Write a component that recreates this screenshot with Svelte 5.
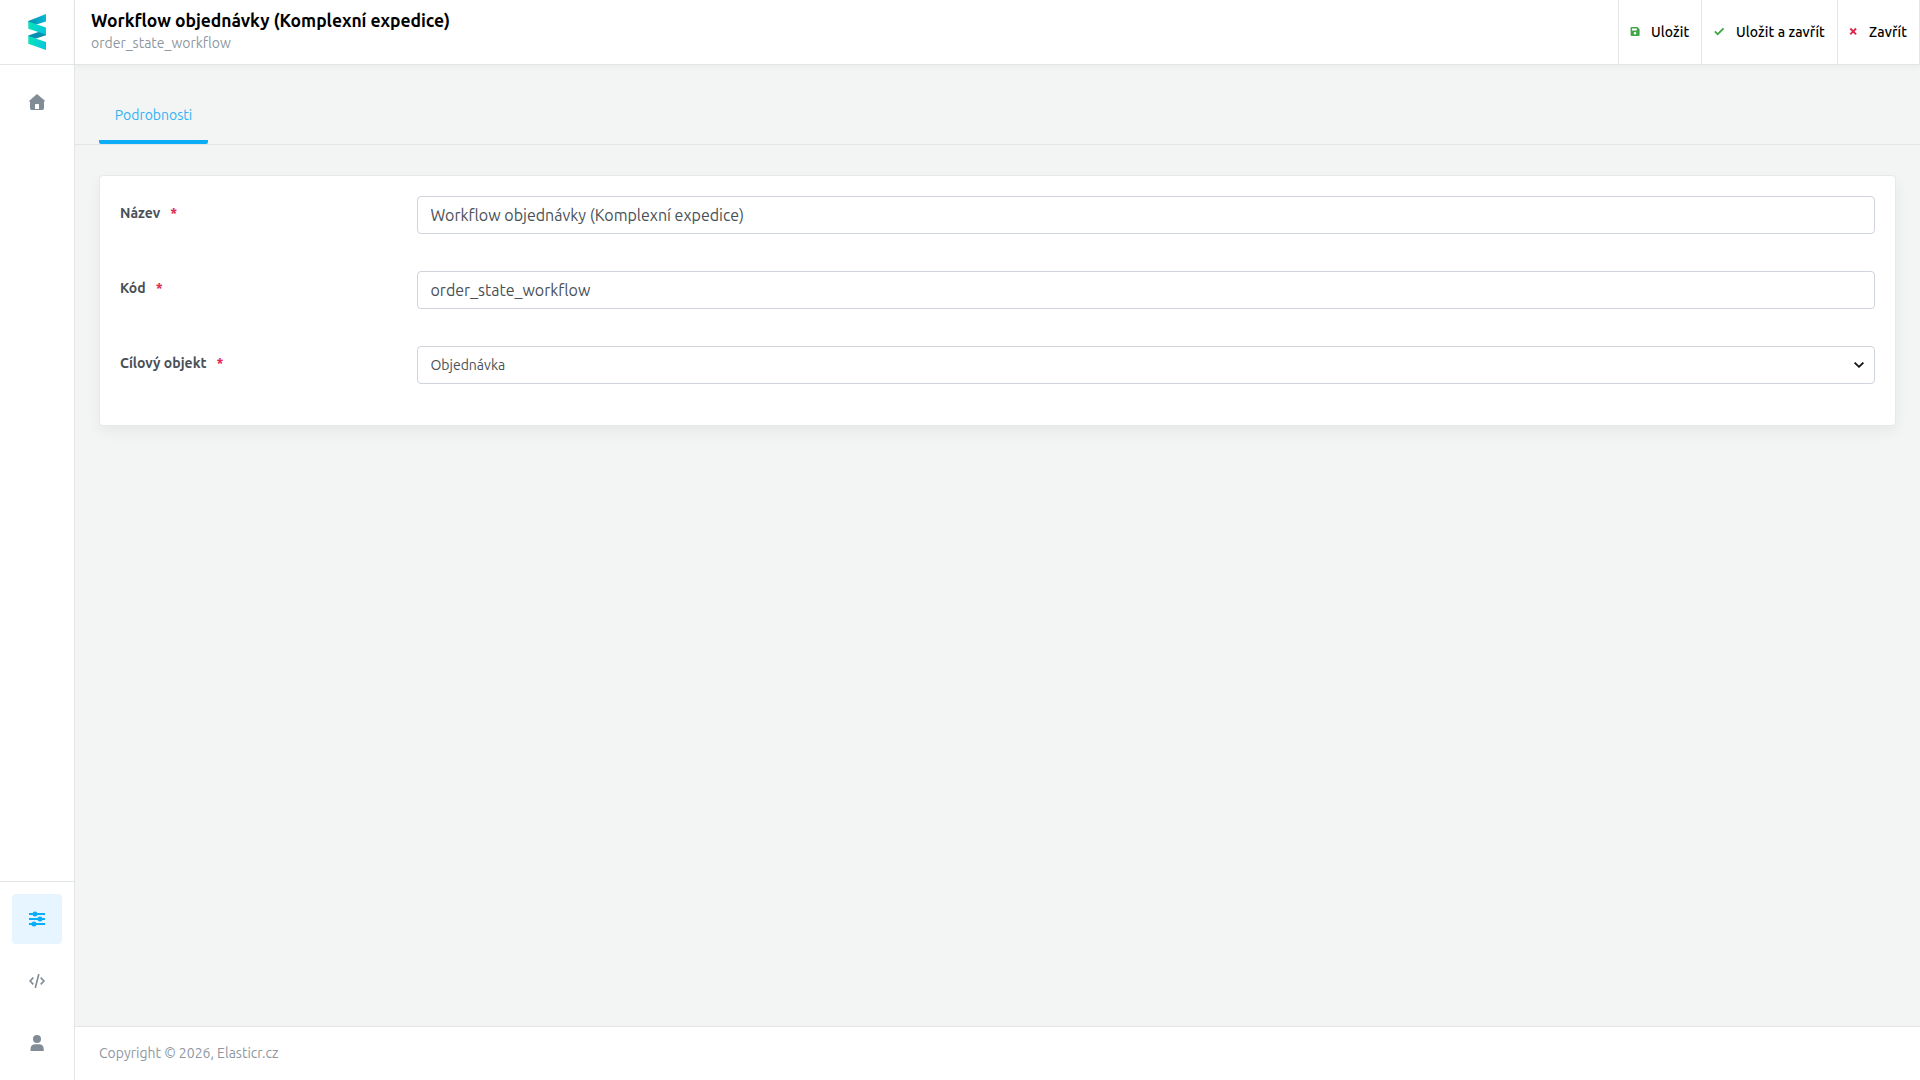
<script lang="ts">
  let name = $state('Workflow objednávky (Komplexní expedice)');
  let code = $state('order_state_workflow');
  let target = $state('order');
</script>

<div class="layout">
  <aside class="sidebar">
    <a class="logo" href="#home" aria-label="Elasticr">
      <svg width="18" height="36" viewBox="-0.3 0 18.3 36" preserveAspectRatio="none">
        <defs>
          <linearGradient id="front" x1="0" x2="1" y1="0" y2="0.3">
            <stop offset="0" stop-color="#0ae5b4" />
            <stop offset="1" stop-color="#06c8dc" />
          </linearGradient>
          <linearGradient id="back" x1="0" x2="1" y1="0" y2="0">
            <stop offset="0" stop-color="#078fae" />
            <stop offset="1" stop-color="#06b9d8" />
          </linearGradient>
        </defs>
        <path d="M0 7 18 0V7.5L6.5 11 0 8.5Z" fill="url(#back)" />
        <path d="M0 22.5V21.5L11 17.7 18 18V21.3L7 24.8Z" fill="#078fb2" />
        <path d="M0 7.5 18 13.5V20.5L0 14.8Z" fill="url(#front)" />
        <path d="M0 22 18 28V36L0 29.7Z" fill="url(#front)" />
      </svg>
    </a>

    <nav class="menu">
      <a class="item" href="#home" aria-label="Home">
        <svg width="16" height="16" viewBox="0 0 16 16" fill="currentColor">
          <path
            fill-rule="evenodd"
            d="M8 0 16 6.7 15.2 7.8 15 7.9V14.3Q15 16 13.3 16H2.7Q1 16 1 14.3V7.9L0 6.9ZM6 15H10V10.8Q10 10 9.2 10H6.8Q6 10 6 10.8Z"
          />
        </svg>
      </a>
    </nav>

    <nav class="menu bottom">
      <a class="item active" href="#settings" aria-label="Settings">
        <svg width="16" height="16" viewBox="0 0 16 16" fill="currentColor">
          <path d="M0 2H16V4H0ZM0 7H16V9H0ZM0 12H16V14H0Z" />
          <circle cx="6" cy="3" r="2.5" />
          <circle cx="11" cy="8" r="2.5" />
          <circle cx="5" cy="13" r="2.5" />
        </svg>
      </a>
      <a class="item" href="#code" aria-label="Code">
        <svg width="16" height="16" viewBox="0 0 16 16" fill="none" stroke="currentColor" stroke-width="1.7">
          <path d="M4.3 4.7 1.1 8 4.3 11.3M11.7 4.7 14.9 8 11.7 11.3M9.8 1.1 6.3 14.9" />
        </svg>
      </a>
      <a class="item" href="#user" aria-label="User">
        <svg width="16" height="16" viewBox="0 0 16 16" fill="currentColor">
          <circle cx="8" cy="4" r="4" />
          <path d="M1.5 16V14.2Q1.5 9.3 6.5 9.3H9.8Q14.7 9.3 14.7 14.2V16Z" />
        </svg>
      </a>
    </nav>
  </aside>

  <div class="page">
    <header class="header">
      <div class="heading">
        <h1>Workflow objednávky (Komplexní expedice)</h1>
        <span class="subtitle">order_state_workflow</span>
      </div>
      <div class="actions">
        <button class="save">
          <svg class="success" width="10" height="10" viewBox="0 0 10 10" fill="currentColor">
            <path
              fill-rule="evenodd"
              d="M1.6 0H7.4L9.6 2.2V7.9Q9.6 9 8.5 9H1.6Q.6 9 .6 8V1Q.6 0 1.6 0ZM2 1.5V3.5H6.8V1.5ZM5 4.9A1.3 1.3 0 1 0 5 7.5 1.3 1.3 0 1 0 5 4.9Z"
            />
          </svg>
          <span>Uložit</span>
        </button>
        <button class="save-close">
          <svg class="success" width="10" height="10" viewBox="0 0 10 10" fill="none" stroke="currentColor" stroke-width="1.8">
            <path d="M.8 4.4 3.7 7.2 9.6 1.3" />
          </svg>
          <span>Uložit a zavřít</span>
        </button>
        <button class="close">
          <svg class="danger" width="8" height="10" viewBox="0 0 8 10" fill="none" stroke="currentColor" stroke-width="1.9">
            <path d="M1.3 1.5 7.1 7.3M7.1 1.5 1.3 7.3" />
          </svg>
          <span>Zavřít</span>
        </button>
      </div>
    </header>

    <main>
      <div class="tabs">
        <button class="tab">Podrobnosti</button>
      </div>

      <form class="card">
        <div class="row">
          <label for="name"><span>Název</span><i>*</i></label>
          <input id="name" class="control" bind:value={name} />
        </div>
        <div class="row">
          <label for="code"><span>Kód</span><i>*</i></label>
          <input id="code" class="control" bind:value={code} />
        </div>
        <div class="row">
          <label for="target"><span>Cílový objekt</span><i>*</i></label>
          <div class="select">
            <select id="target" class="control" bind:value={target}>
              <option value="order">Objednávka</option>
            </select>
            <svg width="10" height="6" viewBox="0 0 10 6" fill="none" stroke="#111" stroke-width="1.8">
              <path d="M.6.6 5 4.8 9.4.6" />
            </svg>
          </div>
        </div>
      </form>
    </main>

    <footer>Copyright © 2026, Elasticr.cz</footer>
  </div>
</div>

<style>
  :global(body) {
    margin: 0;
    background: #f3f5f5;
    font-family: Ubuntu, "Noto Sans", sans-serif;
    font-size: 14px;
    color: #495057;
  }

  * {
    box-sizing: border-box;
  }

  svg {
    display: block;
    flex-shrink: 0;
  }

  button {
    font: inherit;
    border: 0;
    background: none;
    cursor: pointer;
  }

  .layout {
    display: flex;
    height: 100vh;
    overflow: hidden;
  }

  .sidebar {
    display: flex;
    flex-direction: column;
    width: 75px;
    flex-shrink: 0;
    background: #fff;
    border-right: 1px solid #e4e5e7;
  }

  .logo {
    display: flex;
    align-items: center;
    justify-content: center;
    height: 65px;
    border-bottom: 1px solid #e4e5e7;
  }

  .menu {
    display: flex;
    flex-direction: column;
    gap: 12px;
    padding: 12px;
  }

  .menu.bottom {
    margin-top: auto;
    border-top: 1px solid #e4e5e7;
  }

  .item {
    display: flex;
    align-items: center;
    justify-content: center;
    width: 50px;
    height: 50px;
    border-radius: 4px;
    color: #818c96;
  }

  .item.active {
    background: #e6f5ff;
    color: #0cadf6;
  }

  .page {
    display: flex;
    flex-direction: column;
    flex: 1;
    min-width: 0;
  }

  .header {
    display: flex;
    justify-content: space-between;
    height: 65px;
    flex-shrink: 0;
    background: #fff;
    border-bottom: 1px solid #e4e5e7;
    box-shadow: 0 2px 6px rgba(0, 0, 0, 0.04);
  }

  .heading {
    padding: 9px 0 0 16px;
  }

  h1 {
    margin: 0;
    font-size: 17.5px;
    font-weight: 600;
    line-height: 24px;
    letter-spacing: -0.03px;
    color: #000;
    white-space: nowrap;
  }

  .subtitle {
    display: block;
    line-height: 20px;
    color: #8e979f;
  }

  .actions {
    display: flex;
    border-right: 1px solid #e4e5e7;
  }

  .actions button {
    display: flex;
    align-items: center;
    gap: 11px;
    padding: 0 0 0 11px;
    border-left: 1px solid #e4e5e7;
    font-weight: 500;
    letter-spacing: 0.1px;
    color: #000;
    white-space: nowrap;
  }

  .actions .save {
    width: 83px;
  }

  .actions .save-close {
    width: 136px;
    padding-left: 12px;
    gap: 12px;
  }

  .actions .close {
    width: 82px;
    gap: 12px;
  }

  .success {
    color: #3fa648;
  }

  .danger {
    color: #e0264f;
  }

  main {
    flex: 1;
  }

  .tabs {
    display: flex;
    height: 80px;
    padding: 16px 24px 0;
    border-bottom: 1px solid #e4e5e7;
  }

  .tab {
    width: 109px;
    padding: 8px 0 0;
    border-bottom: 4px solid #0cadf6;
    border-radius: 2px;
    color: #2fb2f3;
  }

  .card {
    height: 251px;
    margin: 30px 24px 0;
    padding: 20px;
    background: #fff;
    border: 1px solid #e6e8e9;
    border-radius: 4px;
    box-shadow: 0 6px 14px rgba(0, 0, 0, 0.05);
  }

  .row {
    display: grid;
    grid-template-columns: 297px 1fr;
    height: 75px;
  }

  label {
    display: flex;
    gap: 10px;
    height: 34px;
    line-height: 34px;
    font-weight: 600;
  }

  label i {
    color: #e0264f;
    font-style: normal;
  }

  .control {
    width: 100%;
    height: 38px;
    padding: 0 12.5px;
    background: #fff;
    border: 1px solid #ced4da;
    border-radius: 4px;
    color: #495057;
    font-family: inherit;
    font-size: 16px;
    outline: none;
  }

  select.control {
    appearance: none;
    font-size: 14px;
  }

  .select {
    position: relative;
    height: 38px;
  }

  .select svg {
    position: absolute;
    top: 16px;
    right: 11px;
    pointer-events: none;
  }

  footer {
    height: 54px;
    padding-left: 24px;
    line-height: 53px;
    background: #fff;
    border-top: 1px solid #e4e5e7;
    color: #8e979f;
  }
</style>
